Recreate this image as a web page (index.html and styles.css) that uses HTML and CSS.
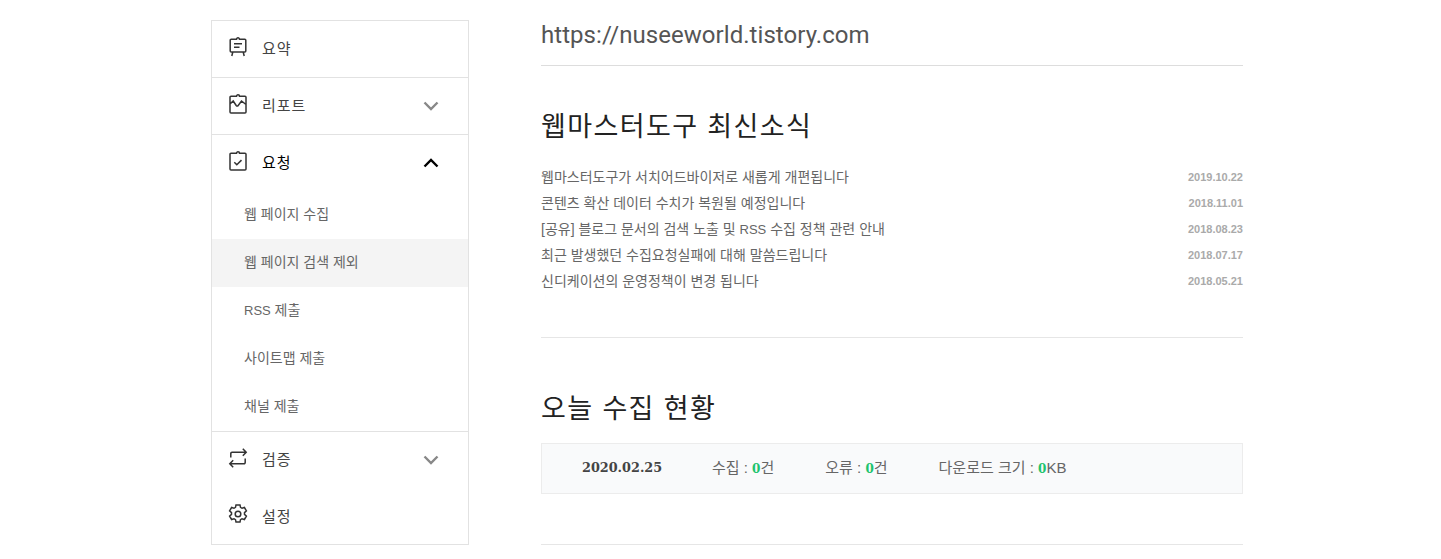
FILE: index.html
```html
<!DOCTYPE html>
<html lang="ko">
<head>
    <meta charset="UTF-8">
    <title>웹마스터도구</title>
    <link rel="stylesheet" href="styles.css">
</head>
<body>
    <div class="wrap">
        <nav class="side">
            <div class="menu">
                <svg class="ico" viewBox="0 0 20 20"><path d="M10 .8a1.500 1.500 0 0 0-1.500 1.500H3.200a1 1 0 0 0-1 1v10.700a1 1 0 0 0 1 1h13.600a1 1 0 0 0 1-1V3.300a1 1 0 0 0-1-1h-5.300A1.500 1.500 0 0 0 10 .8zM6 6.800h8M6 10.300h5.500M4.800 15l-1 4M15.200 15l1 4"/></svg>
                <span>요약</span>
            </div>
            <div class="menu">
                <svg class="ico" viewBox="0 0 20 20"><path d="M10 .8a1.500 1.500 0 0 0-1.500 1.500H3a1 1 0 0 0-1 1V18a1 1 0 0 0 1 1h14a1 1 0 0 0 1-1V3.300a1 1 0 0 0-1-1h-5.500A1.500 1.500 0 0 0 10 .8zM2 10l3.200-3 3 4.500c.6.800 1.400.8 2 0L13.500 7l4.500 3.500"/></svg>
                <span>리포트</span>
                <svg class="arrow" viewBox="0 0 16 10"><path d="M1.500 1.500L8 8l6.500-6.500"/></svg>
            </div>
            <div class="menu open">
                <svg class="ico" viewBox="0 0 20 20"><path d="M10 .8a1.500 1.500 0 0 0-1.500 1.500H3a1 1 0 0 0-1 1V18a1 1 0 0 0 1 1h14a1 1 0 0 0 1-1V3.300a1 1 0 0 0-1-1h-5.500A1.500 1.500 0 0 0 10 .8zM6.300 11.300l2.500 2.500 4.700-4.700"/></svg>
                <span>요청</span>
                <svg class="arrow" viewBox="0 0 16 10"><path d="M1.500 8.500L8 2l6.500 6.500"/></svg>
            </div>
            <ul class="sub">
                <li>웹 페이지 수집</li>
                <li class="on">웹 페이지 검색 제외</li>
                <li><span class="en">RSS</span> 제출</li>
                <li>사이트맵 제출</li>
                <li>채널 제출</li>
            </ul>
            <div class="menu noline">
                <svg class="ico" viewBox="0 0 20 20"><path d="M2.800 9.500V5.500a1.200 1.200 0 0 1 1.200-1.200h14M14.800.8l3.400 3.500-3.400 3.500M17.200 10.500v4a1.200 1.200 0 0 1-1.200 1.200H2M5.200 12.200l-3.400 3.500 3.400 3.500"/></svg>
                <span>검증</span>
                <svg class="arrow" viewBox="0 0 16 10"><path d="M1.500 1.500L8 8l6.500-6.500"/></svg>
            </div>
            <div class="menu last">
                <svg class="ico" viewBox="0 0 20 20"><circle cx="10" cy="10" r="2.800"/><path d="M8 .9h4l.5 2.500 1.500.9 2.400-.8 2 3.400-1.900 1.700v1.800l1.900 1.700-2 3.400-2.400-.8-1.500.9-.5 2.500H8l-.5-2.500-1.500-.9-2.400.8-2-3.400 1.900-1.700V8.600L1.600 6.900l2-3.400 2.400.8 1.500-.9z"/></svg>
                <span>설정</span>
            </div>
        </nav>
        <main class="cont">
            <h2 class="site">https://nuseeworld.tistory.com</h2>
            <section class="news">
                <h3>웹마스터도구 최신소식</h3>
                <ul class="list">
                    <li><a>웹마스터도구가 서치어드바이저로 새롭게 개편됩니다</a><em>2019.10.22</em></li>
                    <li><a>콘텐츠 확산 데이터 수치가 복원될 예정입니다</a><em>2018.11.01</em></li>
                    <li><a>[공유] 블로그 문서의 검색 노출 및 <span class="en">RSS</span> 수집 정책 관련 안내</a><em>2018.08.23</em></li>
                    <li><a>최근 발생했던 수집요청실패에 대해 말씀드립니다</a><em>2018.07.17</em></li>
                    <li><a>신디케이션의 운영정책이 변경 됩니다</a><em>2018.05.21</em></li>
                </ul>
            </section>
            <section class="today">
                <h3>오늘 수집 현황</h3>
                <div class="stat">
                    <strong>2020.02.25</strong>
                    <span>수집 : <b>0</b>건</span>
                    <span>오류 : <b>0</b>건</span>
                    <span>다운로드 크기 : <b>0</b>KB</span>
                </div>
            </section>
        </main>
    </div>
</body>
</html>
```

FILE: styles.css
```css
* {
    box-sizing: border-box;
}

body {
    margin: 0;
    height: 559px;
    overflow: hidden;
    font-family: "Liberation Sans", "Noto Sans CJK KR", sans-serif;
    background: #fff;
    color: #333;
}

.wrap {
    display: flex;
    gap: 72px;
    padding-left: 211px;
}

.side {
    width: 258px;
    height: 525px;
    margin-top: 20px;
    border: 1px solid #e2e2e2;
}

.menu {
    display: flex;
    align-items: center;
    height: 57px;
    padding: 0 29px 3px 16px;
    border-bottom: 1px solid #e2e2e2;
    font-size: 15px;
    letter-spacing: 1px;
    color: #444;
}

.menu.open {
    height: 56px;
    padding-bottom: 4px;
    border-bottom: 0;
    color: #000;
}

.menu.noline {
    height: 56px;
    padding-bottom: 4px;
    border-bottom: 0;
}

.menu.last {
    height: 55px;
    padding-bottom: 0;
    border-bottom: 0;
}

.menu span {
    margin-left: 14px;
    flex: 1;
}

.ico {
    width: 20px;
    height: 20px;
    margin-bottom: 2px;
    fill: none;
    stroke: #333;
    stroke-width: 1.500;
}

.open .ico,
.noline .ico {
    margin-bottom: 0;
}

.last .ico {
    margin-bottom: 4px;
}

.arrow {
    width: 16px;
    height: 10px;
    margin-top: 2px;
    fill: none;
    stroke: #888;
    stroke-width: 2.400;
}

.open .arrow,
.noline .arrow {
    margin-top: 4px;
}

.open .arrow {
    stroke: #000;
}

.sub {
    margin: 0;
    padding: 0;
    list-style: none;
    border-bottom: 1px solid #e2e2e2;
}

.sub li {
    height: 48px;
    line-height: 47px;
    padding-left: 32px;
    font-size: 14px;
    color: #666;
}

.sub li.on {
    background: #f4f4f4;
}

.en {
    font-size: 13px;
}

.cont {
    width: 702px;
}

.site {
    display: flex;
    align-items: center;
    height: 66px;
    margin: 0;
    padding-top: 4px;
    font-family: Roboto, sans-serif;
    font-size: 24px;
    font-weight: 400;
    letter-spacing: 0.05px;
    color: #555;
    border-bottom: 1px solid #ddd;
}

h3 {
    margin: 0;
    font-size: 27px;
    font-weight: 400;
    letter-spacing: 1.400px;
    color: #222;
    line-height: 40px;
}

.news {
    height: 272px;
    padding-top: 41px;
    border-bottom: 1px solid #e6e6e6;
}

.list {
    margin: 16px 0 0;
    padding: 0;
    list-style: none;
}

.list li {
    display: flex;
    justify-content: space-between;
    align-items: center;
    height: 26px;
    font-size: 14px;
    color: #666;
}

.list em {
    margin-top: 2px;
    font-family: "Liberation Sans", sans-serif;
    font-style: normal;
    font-weight: 700;
    font-size: 11px;
    color: #aaa;
}

.today {
    height: 207px;
    padding-top: 51px;
    border-bottom: 1px solid #e6e6e6;
}

.stat {
    display: flex;
    align-items: center;
    height: 51px;
    margin-top: 14px;
    padding: 0 0 4px 40px;
    background: #f9fafb;
    border: 1px solid #ececec;
    font-size: 15px;
    color: #666;
}

.stat strong {
    width: 130px;
    margin-top: 2px;
    font-family: "DejaVu Serif", serif;
    font-size: 12.800px;
    color: #444;
}

.stat span {
    margin-right: 51px;
}

.stat b {
    font-family: "DejaVu Serif", serif;
    font-size: 12px;
    color: #1ec46e;
}
```
